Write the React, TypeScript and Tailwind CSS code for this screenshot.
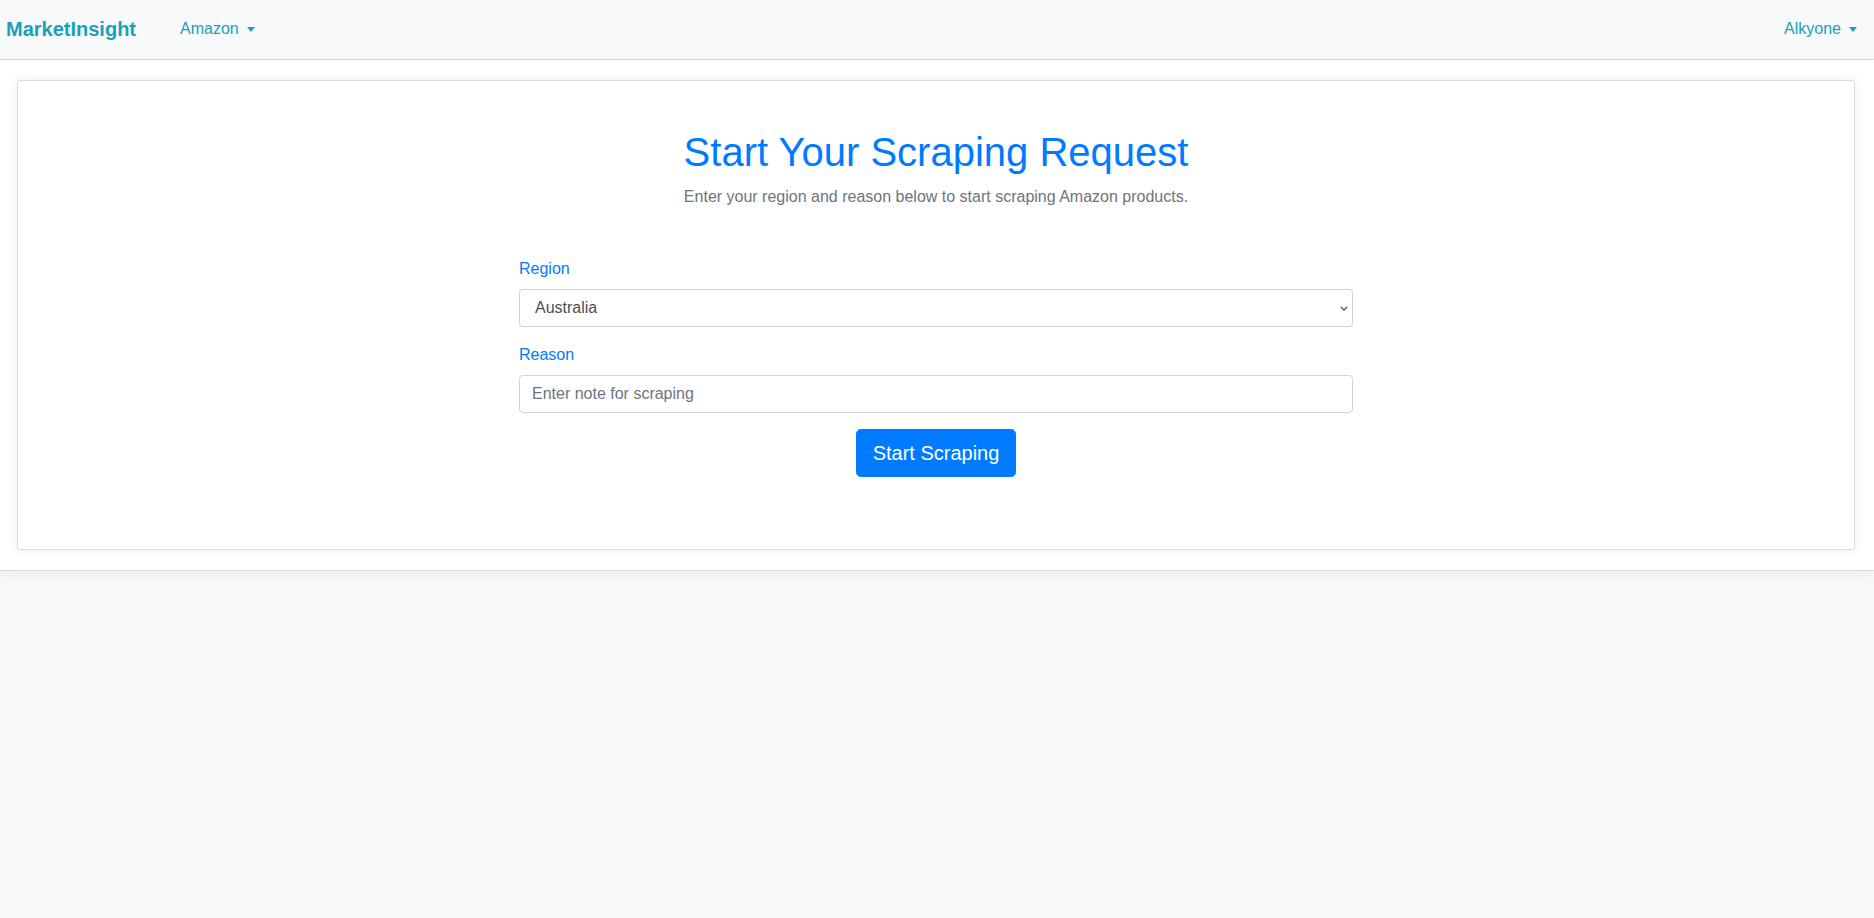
import { useState } from 'react';

const regiones = ['Australia', 'Canada', 'Germany', 'India', 'Japan', 'United Kingdom', 'United States'];

export default function App() {
  const [region, setRegion] = useState('Australia');
  const [reason, setReason] = useState('');

  return (
    <div className="min-h-screen bg-[#f8f8f8] font-['Liberation_Sans',Arial,sans-serif]">
      <Navbar />

      <section className="border-b border-[#dcdcdc] bg-white pb-[20px] pl-[17px] pr-[19px] pt-[20px] shadow-[0_3px_10px_rgba(0,0,0,0.05)]">
        <div className="rounded-[2px] border border-[#dcdcdc] bg-white pb-[72px] pt-[47px] shadow-[0_0_10px_rgba(0,0,0,0.08)]">
          <h1 className="text-center text-[40px] font-normal leading-[48px] text-[#007bff]">
            Start Your Scraping Request
          </h1>
          <p className="mt-[9px] text-center text-base leading-6 text-[#6c757d]">
            Enter your region and reason below to start scraping Amazon products.
          </p>

          <form onSubmit={(e) => e.preventDefault()} className="mx-auto mt-[48px] w-[834px]">
            <Campo label="Region">
              <div className="relative">
                <select
                  value={region}
                  onChange={(e) => setRegion(e.target.value)}
                  className="block h-[38px] w-full appearance-none rounded-[4px] border border-[#ced4da] bg-white pl-[15px] pr-8 text-base text-[#495057] outline-none"
                >
                  {regiones.map((r) => <option key={r} value={r}>{r}</option>)}
                </select>
                <svg viewBox="0 0 8 5" className="pointer-events-none absolute right-[5px] top-[17px] h-[5px] w-[8px]">
                  <path d="M0.8 0.8 L4 4 L7.2 0.8" fill="none" stroke="#5a5a5a" strokeWidth="1.3" />
                </svg>
              </div>
            </Campo>

            <div className="mt-[16px]">
              <Campo label="Reason">
                <input
                  value={reason}
                  onChange={(e) => setReason(e.target.value)}
                  placeholder="Enter note for scraping"
                  className="block h-[38px] w-full rounded-[4px] border border-[#ced4da] bg-white px-3 text-base text-[#495057] outline-none placeholder:text-[#6c757d]"
                />
              </Campo>
            </div>

            <div className="mt-[16px] flex justify-center">
              <button
                type="submit"
                className="rounded-[4.8px] border border-[#007bff] bg-[#007bff] px-4 py-2 text-[20px] leading-[30px] text-white"
              >
                Start Scraping
              </button>
            </div>
          </form>
        </div>
      </section>
    </div>
  );
}

function Navbar() {
  return (
    <nav className="flex h-[60px] items-center justify-between border-b border-[#d9d9d9] bg-[#f8f9fa] pb-[1px]">
      <div className="flex items-center">
        <a className="pl-[6px] text-[20px] font-bold leading-[30px] text-[#17a2b8]">MarketInsight</a>
        <a className="ml-[44px] flex items-center text-base leading-6 text-[#17a2b8]">
          Amazon <Caret />
        </a>
      </div>
      <a className="flex items-center pr-[17px] text-base leading-6 text-[#17a2b8]">
        Alkyone <Caret />
      </a>
    </nav>
  );
}

function Caret() {
  return (
    <span className="ml-[8px] inline-block h-0 w-0 border-x-[4.5px] border-t-[5px] border-x-transparent border-t-[#17a2b8]" />
  );
}

function Campo({ label, children }: { label: string; children: React.ReactNode }) {
  return (
    <label className="block">
      <span className="mb-[8px] block text-base leading-6 text-[#007bff]">{label}</span>
      {children}
    </label>
  );
}
